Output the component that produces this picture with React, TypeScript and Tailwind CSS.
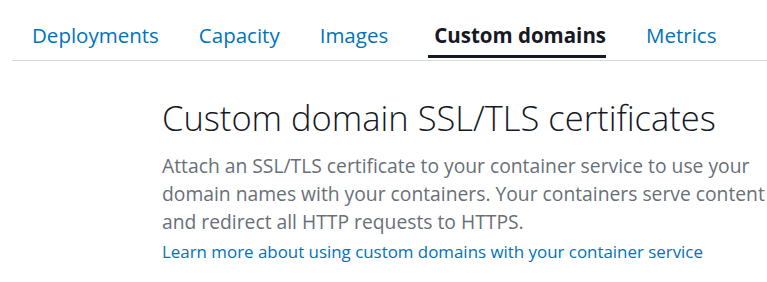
const tabs = ["Deployments", "Capacity", "Images", "Custom domains", "Metrics"]

export default function App() {
  const active = "Custom domains"
  return (
    <div className="h-[282px] w-full bg-white font-['Open_Sans',sans-serif]">
      <nav className="ml-3 flex border-b border-[#d5dbdb]">
        {tabs.map((t) => (
          <div key={t} className="px-5 pt-[23px] pb-[13px]">
            <span
              className={
                t === active
                  ? "relative block pl-[6px] text-[20.5px] leading-6 font-bold text-[#16191f]"
                  : "block text-[20.5px] leading-6 text-[#0073bb]"
              }
            >
              {t}
              {t === active && <span className="absolute left-0 right-0 top-[32px] h-[3px] bg-[#16191f]" />}
            </span>
          </div>
        ))}
      </nav>

      <div className="ml-[162px] mt-[37px] w-[605px]">
        <h1 className="text-[34.5px] leading-10 font-light text-[#16191f]">Custom domain SSL/TLS certificates</h1>
        <p className="mt-[14px] text-[19.3px] leading-7 text-[#687078]">
          Attach an SSL/TLS certificate to your container service to use your domain names with your containers. Your
          containers serve content and redirect all HTTP requests to HTTPS.
        </p>
        <a href="#" className="mt-[6px] block text-[16.9px] leading-5 text-[#0073bb]">
          Learn more about using custom domains with your container service
        </a>
      </div>
    </div>
  )
}
